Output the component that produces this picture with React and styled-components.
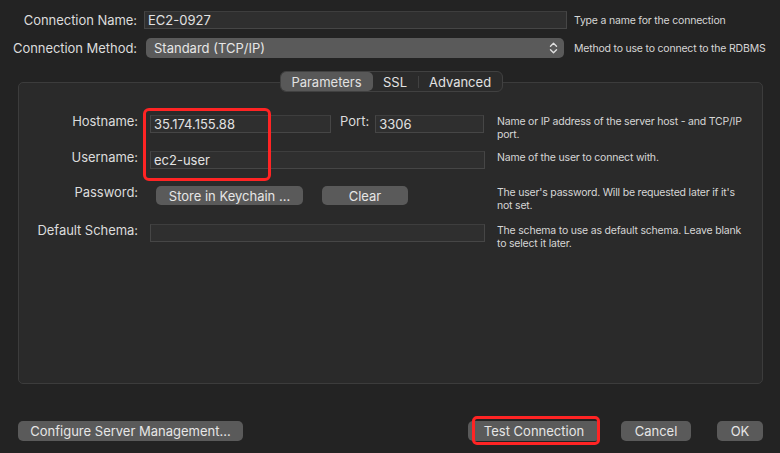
import React from "react";
import styled, { createGlobalStyle } from "styled-components";

const Global = createGlobalStyle`
  html, body { margin: 0; padding: 0; }
  body {
    background: #232323;
    width: 780px;
    height: 453px;
    overflow: hidden;
    font-family: "Inter", "Liberation Sans", sans-serif;
    color: #dedede;
    -webkit-font-smoothing: antialiased;
  }
`;

const Page = styled.div`
  width: 780px;
  height: 453px;
  display: flex;
  flex-direction: column;
  box-sizing: border-box;
  padding-top: 11px;
`;

const TopGrid = styled.div`
  display: grid;
  grid-template-columns: 137px 423px 1fr;
  grid-template-rows: 18px 20px;
  column-gap: 7px;
  row-gap: 9px;
  align-items: center;
`;

const Label = styled.div`
  font-size: 13px;
  line-height: 16px;
  text-align: right;
  white-space: nowrap;
  color: #dcdcdc;
  letter-spacing: -0.05px;
  align-self: ${(p) => (p.$top ? "start" : "center")};
  margin-top: ${(p) => (p.$top ? "-2px" : "0")};
`;

const Help = styled.div`
  font-size: 10.5px;
  letter-spacing: -0.2px;
  line-height: 13px;
  color: #d6d6d6;
  white-space: nowrap;
  align-self: ${(p) => (p.$top ? "start" : "center")};
  margin-top: ${(p) => (p.$top ? "0" : "0")};
`;

const Input = styled.div`
  box-sizing: border-box;
  height: 18px;
  width: ${(p) => p.$w || "100%"};
  background: #2f2f2f;
  border: 1px solid #464646;
  border-top-color: #3e3e3e;
  font-size: 13px;
  line-height: 16px;
  padding-left: 3px;
  color: #e2e2e2;
  white-space: nowrap;
`;

const Select = styled.div`
  box-sizing: border-box;
  height: 20px;
  margin-left: 2px;
  width: 418px;
  background: #5a5a5a;
  border-radius: 5px;
  display: flex;
  align-items: center;
  justify-content: space-between;
  padding: 0 6px 0 8px;
  font-size: 13px;
  color: #e6e6e6;
`;

const Panel = styled.div`
  position: relative;
  box-sizing: border-box;
  margin: 24px 0 0 18px;
  width: 745px;
  height: 302px;
  background: #2a2a2a;
  border: 1px solid #3c3c3c;
  border-radius: 5px;
  display: flex;
  flex-direction: column;
`;

const Tabs = styled.div`
  align-self: center;
  margin: -12px 0 0 1px;
  box-sizing: border-box;
  height: 21px;
  width: 223px;
  display: flex;
  align-items: center;
  background: #2b2b2b;
  border: 1px solid #414141;
  border-radius: 6px;
`;

const Tab = styled.div`
  box-sizing: border-box;
  height: 19px;
  width: ${(p) => p.$w}px;
  display: flex;
  align-items: center;
  justify-content: center;
  font-size: 13px;
  color: #e2e2e2;
  background: ${(p) => (p.$active ? "#585858" : "transparent")};
  border-radius: 5px;
`;

const TabSep = styled.div`
  width: 1px;
  height: 12px;
  background: #414141;
`;

const Form = styled.div`
  margin-top: 23px;
  display: grid;
  grid-template-columns: 119px 335px 1fr;
  grid-template-rows: 36px 35px 38px auto;
  column-gap: 12px;
  align-items: start;
`;

const FieldRow = styled.div`
  display: flex;
  align-items: flex-start;
`;

const PortLabel = styled.div`
  font-size: 13px;
  line-height: 16px;
  margin: -2px 6px 0 9px;
  color: #dcdcdc;
`;

const Button = styled.div`
  box-sizing: border-box;
  height: ${(p) => p.$h || 20}px;
  width: ${(p) => p.$w}px;
  background: #5a5a5a;
  border-radius: 5px;
  display: flex;
  align-items: center;
  justify-content: center;
  font-size: 13px;
  color: #e6e6e6;
  white-space: nowrap;
  margin-left: ${(p) => p.$ml || 0}px;
`;

const Bottom = styled.div`
  margin-top: 37px;
  display: flex;
  align-items: center;
  padding: 0 17px 0 18px;
`;

const Spacer = styled.div`
  flex: 1;
`;

const Marked = styled.div`
  position: relative;
`;

const RedBox = styled.div`
  position: absolute;
  box-sizing: border-box;
  border: 3px solid #ff2424;
  border-radius: ${(p) => p.$r || 5}px;
  left: ${(p) => p.$l}px;
  top: ${(p) => p.$t}px;
  width: ${(p) => p.$w}px;
  height: ${(p) => p.$h}px;
  pointer-events: none;
`;

const Chevrons = () => (
  <svg width="9" height="12" viewBox="0 0 9 12" fill="none" stroke="#e0e0e0" strokeWidth="1.4" strokeLinecap="round" strokeLinejoin="round">
    <path d="M1.5 4.2 L4.5 1.3 L7.5 4.2" />
    <path d="M1.5 7.8 L4.5 10.7 L7.5 7.8" />
  </svg>
);

export default function App() {
  return (
    <>
      <Global />
      <Page>
        <TopGrid>
          <Label>Connection Name:</Label>
          <Input>EC2-0927</Input>
          <Help>Type a name for the connection</Help>
          <Label>Connection Method:</Label>
          <Select>
            <span>Standard (TCP/IP)</span>
            <Chevrons />
          </Select>
          <Help>Method to use to connect to the RDBMS</Help>
        </TopGrid>

        <Panel>
          <Tabs>
            <Tab $active $w={92}>Parameters</Tab>
            <Tab $w={45}>SSL</Tab>
            <TabSep />
            <Tab $w={83}>Advanced</Tab>
          </Tabs>
          <Form>
            <Label $top>Hostname:</Label>
            <FieldRow>
              <Input $w="181px">35.174.155.88</Input>
              <PortLabel>Port:</PortLabel>
              <Input $w="109px">3306</Input>
            </FieldRow>
            <Help $top>
              Name or IP address of the server host - and TCP/IP
              <br />
              port.
            </Help>

            <Label $top>Username:</Label>
            <Input>ec2-user</Input>
            <Help $top>Name of the user to connect with.</Help>

            <Label $top>Password:</Label>
            <FieldRow>
              <Button $w={147} $h={19} $ml={6}>Store in Keychain ...</Button>
              <Button $w={86} $h={19} $ml={19}>Clear</Button>
            </FieldRow>
            <Help $top>
              The user's password. Will be requested later if it's
              <br />
              not set.
            </Help>

            <Label $top>Default Schema:</Label>
            <Input />
            <Help $top>
              The schema to use as default schema. Leave blank
              <br />
              to select it later.
            </Help>
          </Form>
          <RedBox $l={124} $t={25} $w={128} $h={73} $r={6} />
        </Panel>

        <Bottom>
          <Button $w={225}>Configure Server Management...</Button>
          <Spacer />
          <Marked>
            <Button $w={132}>Test Connection</Button>
            <RedBox $l={4} $t={-5} $w={128} $h={29} />
          </Marked>
          <Button $w={70} $ml={21}>Cancel</Button>
          <Button $w={46} $ml={26}>OK</Button>
        </Bottom>
      </Page>
    </>
  );
}
